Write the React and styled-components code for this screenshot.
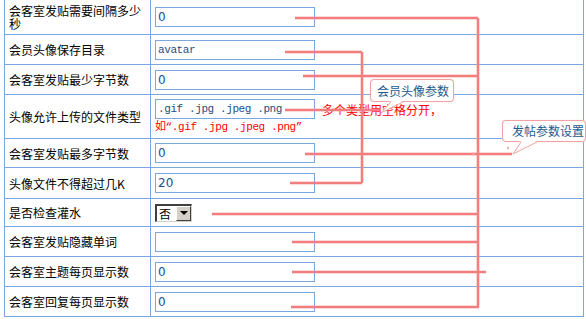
import styled, { createGlobalStyle } from "styled-components";

const GlobalStyle = createGlobalStyle`
  html, body {
    margin: 0;
    padding: 0;
    background: #fff;
    overflow: hidden;
  }
  body {
    font-family: "Noto Sans CJK SC", "Liberation Sans", sans-serif;
    font-size: 12px;
  }
`;

const Page = styled.div`
  position: relative;
  width: 586px;
  height: 319px;
  overflow: hidden;
  padding-left: 4px;
  box-sizing: border-box;
`;

const Table = styled.div`
  display: flex;
  flex-direction: column;
  gap: 1px;
  width: 580px;
  margin-top: -1px;
  border: 1px solid #7aa7e0;
  background: #7aa7e0;
  box-sizing: border-box;
`;

const Row = styled.div`
  display: grid;
  grid-template-columns: 145px 432px;
  gap: 1px;
  height: ${(p) => p.$h}px;
`;

const Label = styled.div`
  background: #fff;
  display: flex;
  align-items: center;
  padding: 0 4px;
  line-height: 13px;
  color: #000;
`;

const Field = styled.div`
  background: #fff;
  display: flex;
  flex-direction: column;
  justify-content: center;
  align-items: flex-start;
  padding: 0 4px;
`;

const Input = styled.input`
  width: 160px;
  height: 20px;
  box-sizing: border-box;
  margin: 0;
  border: 1px solid #7aa7e0;
  padding: 0 2px;
  outline: none;
  color: #1b4e7e;
  background: #fff;
  font-family: ${(p) =>
    p.$mono ? '"Liberation Mono", monospace' : '"DejaVu Sans", sans-serif'};
  font-size: ${(p) => (p.$mono ? "11px" : "12px")};
  letter-spacing: ${(p) => (p.$mono ? "-0.4px" : "0")};
`;

const Hint = styled.div`
  margin-top: 2px;
  color: #f00;
  font-family: "Liberation Mono", "Noto Sans CJK SC", monospace;
  font-size: 11px;
  letter-spacing: -0.4px;
  line-height: 13px;
  white-space: nowrap;
`;

const Select = styled.div`
  display: flex;
  width: 37px;
  height: 18px;
  box-sizing: border-box;
  border-style: solid;
  border-width: 2px 1px 1px 2px;
  border-color: #404040 #d4d0c8 #d4d0c8 #404040;
  background: #fff;
`;

const SelectValue = styled.span`
  flex: 1;
  line-height: 15px;
  padding-left: 2px;
  color: #000;
`;

const SelectButton = styled.span`
  width: 15px;
  box-sizing: border-box;
  background: #d4d0c8;
  border-style: solid;
  border-width: 1px;
  border-color: #fff #404040 #404040 #fff;
  display: flex;
  align-items: center;
  justify-content: center;
`;

const Arrow = styled.span`
  width: 0;
  height: 0;
  border-left: 4px solid transparent;
  border-right: 4px solid transparent;
  border-top: 4px solid #000;
`;

const Overlay = styled.svg`
  position: absolute;
  left: 0;
  top: 0;
  pointer-events: none;
`;

const Note = styled.div`
  position: absolute;
  left: ${(p) => p.$x}px;
  top: ${(p) => p.$y}px;
  color: #f00;
  white-space: nowrap;
  line-height: 14px;
`;

const Callout = styled.div`
  position: absolute;
  left: ${(p) => p.$x}px;
  top: ${(p) => p.$y}px;
  width: ${(p) => p.$w}px;
  height: ${(p) => p.$h}px;
  box-sizing: border-box;
  padding-left: ${(p) => p.$pad}px;
  border: 1px solid #f1a3a3;
  border-radius: 4px;
  background: #fff;
  color: #1d5a8e;
  line-height: ${(p) => p.$h - 2}px;
  white-space: nowrap;
  box-shadow: 0 0 1px #f7caca;
`;

const Tail = styled.svg`
  position: absolute;
  left: 0;
  top: 0;
  overflow: visible;
`;

const rows = [
  { label: "会客室发贴需要间隔多少秒", h: 34, value: "0" },
  { label: "会员头像保存目录", h: 29, value: "avatar", mono: true },
  { label: "会客室发贴最少字节数", h: 29, value: "0" },
  {
    label: "头像允许上传的文件类型",
    h: 43,
    value: ".gif .jpg .jpeg .png",
    mono: true,
    hint: "如“.gif .jpg .jpeg .png”",
  },
  { label: "会客室发贴最多字节数", h: 28, value: "0" },
  { label: "头像文件不得超过几K", h: 30, value: "20" },
  { label: "是否检查灌水", h: 27, select: "否" },
  { label: "会客室发贴隐藏单词", h: 29, value: "" },
  { label: "会客室主题每页显示数", h: 29, value: "0" },
  { label: "会客室回复每页显示数", h: 29, value: "0" },
];

// annotation lines: [x1, y1, x2, y2]
const lines = [
  [478, 18, 478, 307],
  [362, 52, 362, 183],
  [295, 18, 478, 18],
  [285, 52, 362, 52],
  [303, 76, 478, 76],
  [285, 110, 381, 110],
  [305, 154, 512, 154],
  [290, 183, 362, 183],
  [212, 214, 478, 214],
  [292, 242, 478, 242],
  [292, 272, 486, 272],
  [291, 307, 479, 307],
];

function CalloutBox({ x, y, w, h, pad, tail, children }) {
  return (
    <Callout $x={x} $y={y} $w={w} $h={h} $pad={pad}>
      {children}
      <Tail width="1" height="1">
        <polygon
          points={`${tail[0]},${h - 2} ${tail[1]},${h - 2} ${tail[2]},${tail[3]}`}
          fill="#fff"
        />
        <polyline
          points={`${tail[0]},${h - 1} ${tail[2]},${tail[3]} ${tail[1]},${h - 1}`}
          fill="none"
          stroke="#f1a3a3"
          strokeWidth="1"
        />
      </Tail>
    </Callout>
  );
}

export default function App() {
  return (
    <Page>
      <GlobalStyle />
      <Table>
        {rows.map((r) => (
          <Row key={r.label} $h={r.h}>
            <Label>{r.label}</Label>
            <Field>
              {r.select ? (
                <Select>
                  <SelectValue>{r.select}</SelectValue>
                  <SelectButton>
                    <Arrow />
                  </SelectButton>
                </Select>
              ) : (
                <Input $mono={r.mono} defaultValue={r.value} readOnly />
              )}
              {r.hint && <Hint>{r.hint}</Hint>}
            </Field>
          </Row>
        ))}
      </Table>

      <Note $x={322} $y={103}>多个类型用空格分开，</Note>

      <Overlay width="586" height="319">
        {lines.map(([x1, y1, x2, y2], i) => (
          <g key={i}>
            <line x1={x1} y1={y1} x2={x2} y2={y2} stroke="rgba(245,150,150,0.35)" strokeWidth="4" />
            <line x1={x1} y1={y1} x2={x2} y2={y2} stroke="#f27d7d" strokeWidth="2" />
          </g>
        ))}
        <circle cx="508" cy="148" r="1.2" fill="#f6b0b0" />
        <circle cx="473" cy="154" r="1.5" fill="#f39a9a" />
      </Overlay>

      <CalloutBox x={370} y={79} w={84} h={23} pad={6} tail={[20, 32, 10, 33]}>
        会员头像参数
      </CalloutBox>
      <CalloutBox x={502} y={120} w={84} h={22} pad={9} tail={[18, 34, 10, 33]}>
        发帖参数设置
      </CalloutBox>
    </Page>
  );
}
